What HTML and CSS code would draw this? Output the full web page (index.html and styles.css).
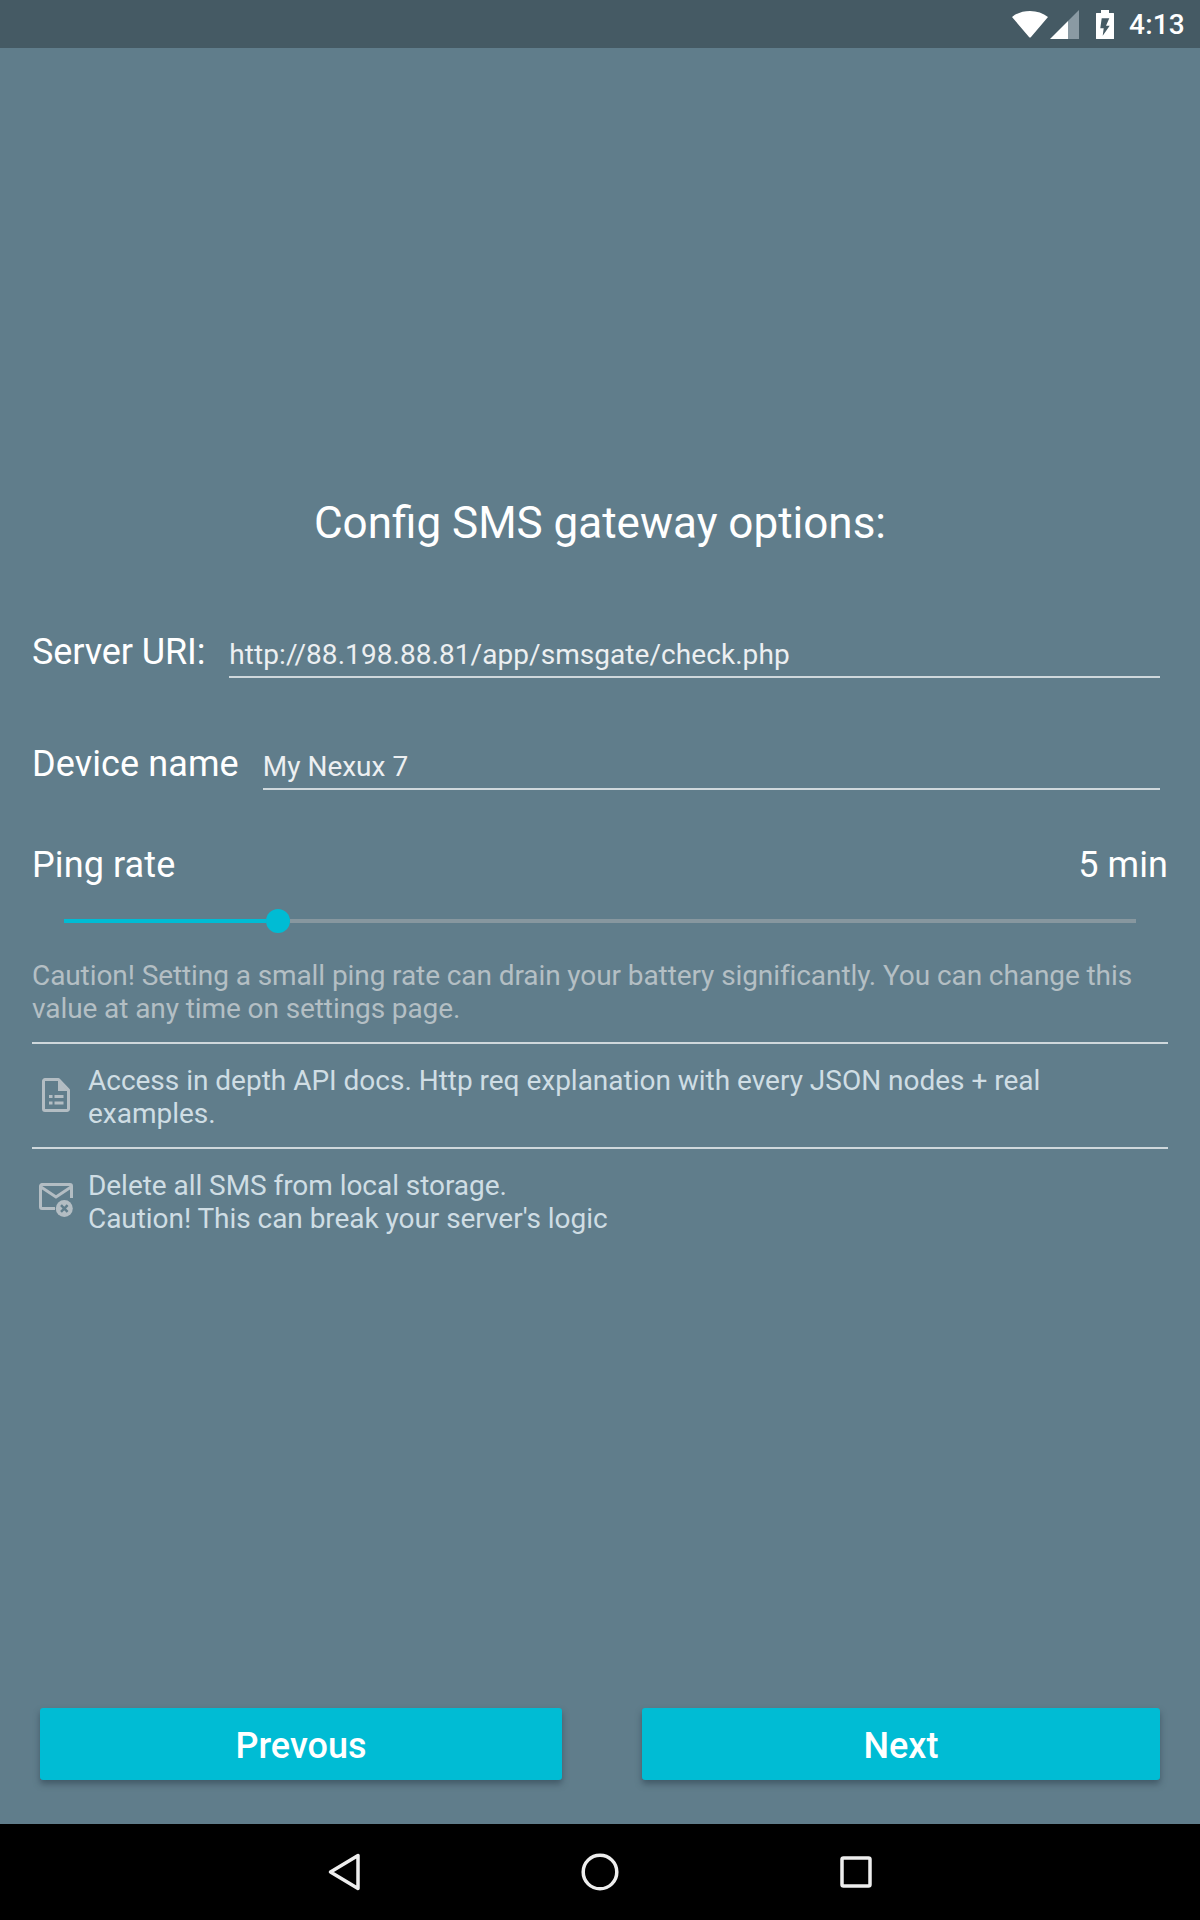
FILE: index.html
```html
<!DOCTYPE html>
<html lang="en">
<head>
    <meta charset="UTF-8">
    <title>Config SMS gateway options</title>
    <link rel="stylesheet" href="styles.css">
</head>
<body>
    <div class="status-bar">
        <svg class="icon-wifi" width="36" height="27" viewBox="0 0 36 27"><path d="M0 6C5 2 11 0 18 0S31 2 36 6L19 26a1.300 1.300 0 0 1-2 0z" fill="#fff"/></svg>
        <svg class="icon-signal" width="29" height="29" viewBox="0 0 29 29"><path d="M29 0V29H18V11z" fill="#8a9aa3"/><path d="M18 11V29H0z" fill="#fff"/></svg>
        <svg class="icon-battery" width="18" height="29" viewBox="0 0 18 29"><path fill-rule="evenodd" d="M5 0h8v3h4.500a.5.5 0 0 1 .5.5v25a.5.5 0 0 1-.5.5H.5a.5.5 0 0 1-.5-.5v-25A.5.5 0 0 1 .5 3H5zM5.700 8.300H13.300L10 15.700h3.700L6.700 25.700l1-7.400H4.300z" fill="#fff"/></svg>
        <span class="clock">4:13</span>
    </div>

    <div class="content">
        <h1 class="title">Config SMS gateway options:</h1>

        <div class="field field-uri">
            <label>Server URI:</label>
            <div class="field-value">http://88.198.88.81/app/smsgate/check.php</div>
        </div>
        <div class="field field-device">
            <label>Device name</label>
            <div class="field-value">My Nexux 7</div>
        </div>

        <div class="ping-row">
            <span>Ping rate</span>
            <span>5 min</span>
        </div>
        <div class="slider">
            <div class="slider-fill"></div>
            <div class="slider-thumb"></div>
            <div class="slider-rest"></div>
        </div>
        <p class="caution">Caution! Setting a small ping rate can drain your battery significantly. You can change this value at any time on settings page.</p>

        <div class="option option-docs">
            <svg class="option-icon" width="28" height="34" viewBox="0 0 28 34"><path d="M3 1.500h13.500L26.500 12v19a1.500 1.500 0 0 1-1.500 1.500H3A1.500 1.500 0 0 1 1.500 31V3A1.500 1.500 0 0 1 3 1.500z" fill="none" stroke="#b3bdc3" stroke-width="3" stroke-linejoin="round"/><path d="M16 2l10 11H16z" fill="#b3bdc3"/><path d="M7 18.500h3.500M12.500 18.500h9M7 25h3.500M12.500 25h9" stroke="#b3bdc3" stroke-width="3"/></svg>
            <p>Access in depth API docs. Http req explanation with every JSON nodes + real examples.</p>
        </div>
        <div class="option option-delete">
            <svg class="option-icon" width="34" height="34" viewBox="0 0 34 34"><path d="M16 25.500H3A1.500 1.500 0 0 1 1.500 24V3A1.500 1.500 0 0 1 3 1.500h28A1.500 1.500 0 0 1 32.500 3v12" fill="none" stroke="#b3bdc3" stroke-width="3"/><path d="M2 4l15 10L32 4" fill="none" stroke="#b3bdc3" stroke-width="3"/><circle cx="25.300" cy="25.500" r="8.500" fill="#b3bdc3"/><path d="M22 22.200l6.600 6.600m0-6.600L22 28.800" stroke="#607d8b" stroke-width="2.500"/></svg>
            <p>Delete all SMS from local storage.<br>Caution! This can break your server's logic</p>
        </div>

        <div class="buttons">
            <button class="btn btn-prev">Prevous</button>
            <button class="btn btn-next">Next</button>
        </div>
    </div>

    <div class="nav-bar">
        <svg width="32" height="38" viewBox="0 0 32 38"><path d="M30 2.500V35.500L2.500 19z" fill="none" stroke="#eee" stroke-width="3.500" stroke-linejoin="round"/></svg>
        <svg width="38" height="38" viewBox="0 0 38 38"><circle cx="19" cy="19" r="16.800" fill="none" stroke="#eee" stroke-width="3.500"/></svg>
        <svg width="32" height="32" viewBox="0 0 32 32"><rect x="2" y="2" width="28" height="28" rx="1.500" fill="none" stroke="#eee" stroke-width="3.500"/></svg>
    </div>
</body>
</html>
```

FILE: styles.css
```css
/* General Reset */
* {
    margin: 0;
    padding: 0;
    box-sizing: border-box;
}

body {
    width: 1200px;
    height: 1920px;
    display: flex;
    flex-direction: column;
    font-family: Roboto, "Liberation Sans", sans-serif;
    background-color: #607d8b;
    color: white;
    overflow: hidden;
}

.status-bar {
    height: 48px;
    flex-shrink: 0;
    display: flex;
    align-items: center;
    justify-content: flex-end;
    padding-right: 15px;
    background-color: #455a64;
}

.icon-wifi {
    margin-right: 2px;
}

.icon-battery {
    margin-left: 17px;
    margin-right: 15px;
}

.clock {
    font-size: 28px;
    font-weight: 500;
    letter-spacing: 0.2px;
}

.content {
    flex: 1;
    display: flex;
    flex-direction: column;
    padding: 0 32px 44px 32px;
}

.title {
    margin-top: 449px;
    height: 52px;
    font-size: 44px;
    line-height: 52px;
    font-weight: 400;
    text-align: center;
}

.field {
    display: flex;
    align-items: flex-end;
    height: 50px;
    margin-right: 8px;
}

.field-uri {
    margin-top: 79px;
}

.field-device {
    margin-top: 62px;
}

.field label {
    font-size: 36px;
    line-height: 42px;
    padding-bottom: 5px;
}

.field-uri label {
    letter-spacing: -0.1px;
}

.field-device label {
    letter-spacing: 0.1px;
}

.field-value {
    flex: 1;
    font-size: 28px;
    line-height: 34px;
    padding-bottom: 4px;
    border-bottom: 2px solid #cfd8dc;
    color: #eceff1;
}

.field-uri .field-value {
    margin-left: 24px;
    letter-spacing: 0.06px;
}

.field-device .field-value {
    margin-left: 24px;
}

.ping-row {
    display: flex;
    justify-content: space-between;
    margin-top: 51px;
    font-size: 36px;
    line-height: 48px;
    letter-spacing: 0.1px;
}

.slider {
    display: flex;
    align-items: center;
    height: 24px;
    margin: 20px 32px 0 32px;
}

.slider-fill {
    width: 202px;
    height: 4px;
    background-color: #00bcd4;
}

.slider-thumb {
    width: 24px;
    height: 24px;
    border-radius: 50%;
    background-color: #00bcd4;
}

.slider-rest {
    flex: 1;
    height: 4px;
    background-color: #87979f;
}

.caution {
    margin-top: 26px;
    padding-bottom: 17px;
    font-size: 28px;
    line-height: 33px;
    letter-spacing: -0.09px;
    color: #b4bfc4;
}

.option {
    display: flex;
    border-top: 2px solid #cfd8dc;
    padding-top: 20px;
    font-size: 28px;
    line-height: 33px;
    color: #cfdde4;
}

.option-docs {
    height: 105px;
    letter-spacing: -0.015px;
}

.option-delete {
    letter-spacing: -0.05px;
}

.option-icon {
    flex-shrink: 0;
    margin-top: 14px;
}

.option-docs .option-icon {
    margin-left: 10px;
    margin-right: 18px;
}

.option-delete .option-icon {
    margin-left: 7px;
    margin-right: 15px;
}

.buttons {
    margin-top: auto;
    display: flex;
    padding-left: 8px;
}

.btn {
    height: 72px;
    padding-top: 3px;
    border: none;
    border-radius: 3px;
    background-color: #00bcd4;
    color: white;
    font-family: Roboto, "Liberation Sans", sans-serif;
    font-size: 36px;
    font-weight: 500;
    box-shadow: 0 4px 6px rgba(40, 60, 75, 0.55);
}

.btn-prev {
    width: 522px;
    margin-right: 80px;
}

.btn-next {
    width: 518px;
}

.nav-bar {
    height: 96px;
    flex-shrink: 0;
    display: flex;
    align-items: center;
    justify-content: center;
    gap: 221px;
    background-color: black;
}
```
